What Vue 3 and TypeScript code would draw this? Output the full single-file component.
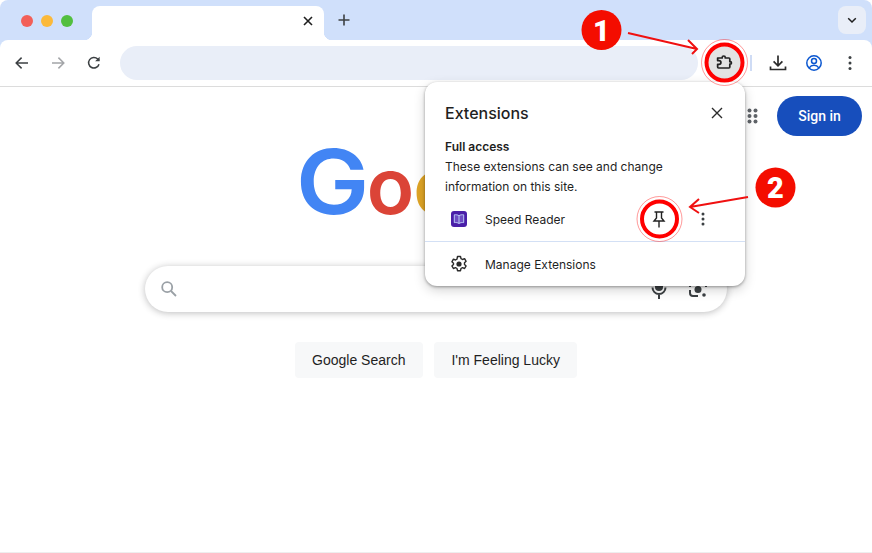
<template>
  <div class="browser">
    <!-- tab strip -->
    <div class="tabstrip">
      <div class="traffic">
        <span class="light red"></span>
        <span class="light amber"></span>
        <span class="light green"></span>
      </div>
      <div class="tab">
        <svg class="tab-close" width="12" height="12" viewBox="0 0 12 12">
          <path d="M2 2l8 8M10 2l-8 8" stroke="#1f1f1f" stroke-width="1.6" fill="none" />
        </svg>
      </div>
      <svg class="new-tab" width="14" height="14" viewBox="0 0 14 14">
        <path d="M7 1.5v11M1.5 7h11" stroke="#3c4043" stroke-width="1.6" fill="none" />
      </svg>
      <div class="tab-search">
        <svg width="12" height="12" viewBox="0 0 12 12">
          <path d="M2.2 4.2L6 8l3.8-3.8" stroke="#1f1f1f" stroke-width="1.5" fill="none" />
        </svg>
      </div>
    </div>

    <!-- toolbar -->
    <div class="toolbar">
      <button class="tool">
        <svg width="16" height="16" viewBox="0 0 16 16">
          <path d="M14 8H2.6M7.6 2.6L2.2 8l5.4 5.4" stroke="#3c4043" stroke-width="1.5" fill="none" />
        </svg>
      </button>
      <button class="tool">
        <svg width="16" height="16" viewBox="0 0 16 16">
          <path d="M2 8h11.4M8.4 2.6L13.800 8l-5.400 5.400" stroke="#a3a5a8" stroke-width="1.5" fill="none" />
        </svg>
      </button>
      <button class="tool">
        <svg width="16" height="16" viewBox="0 0 16 16">
          <path d="M13 9.2A5.3 5.3 0 1 1 11.700 4L13.200 5.600" stroke="#3c4043" stroke-width="1.5" fill="none" />
          <path d="M13.600 1.800v4.500H9.100z" fill="#3c4043" />
        </svg>
      </button>
      <div class="omnibox"></div>
      <button class="tool ext-btn">
        <svg width="20" height="20" viewBox="0 0 22 22">
          <path d="M4 5.500h5V5a1.700 1.700 0 0 1 3.400 0v.5h4a1 1 0 0 1 1 1v3h.4a1.400 1.400 0 0 1 0 2.800h-.4v3.200a1 1 0 0 1-1 1H5a1 1 0 0 1-1-1v-3h1.500a2.100 2.100 0 0 0 0-4.200H4z" stroke="#222" stroke-width="1.900" stroke-linejoin="round" fill="none" />
        </svg>
      </button>
      <span class="sep"></span>
      <button class="tool">
        <svg width="18" height="18" viewBox="0 0 18 18">
          <path d="M9 1.500v10M4.600 7.400L9 11.800l4.400-4.400M1.500 12.500v3h15v-3" stroke="#2b2b2b" stroke-width="1.700" fill="none" />
        </svg>
      </button>
      <button class="tool">
        <svg width="18" height="18" viewBox="0 0 18 18">
          <circle cx="9" cy="9" r="7.200" stroke="#0b57d0" stroke-width="1.500" fill="none" />
          <circle cx="9" cy="7" r="2.500" stroke="#0b57d0" stroke-width="1.500" fill="none" />
          <path d="M4.200 13.800c1.200-1.800 2.800-2.500 4.800-2.500s3.600.7 4.800 2.500" stroke="#0b57d0" stroke-width="1.500" fill="none" />
        </svg>
      </button>
      <button class="tool">
        <svg width="16" height="16" viewBox="0 0 16 16">
          <circle cx="8" cy="2.500" r="1.500" fill="#3c4043" />
          <circle cx="8" cy="8" r="1.500" fill="#3c4043" />
          <circle cx="8" cy="13.500" r="1.500" fill="#3c4043" />
        </svg>
      </button>
    </div>

    <!-- google home -->
    <div class="page">
      <div class="page-top">
        <svg class="apps" width="12" height="16" viewBox="0 0 12 16">
          <g fill="#5f6368">
            <template v-for="y in [2.5, 8, 13.5]" :key="y">
              <circle cx="2.500" :cy="y" r="2" />
              <circle cx="8.500" :cy="y" r="2" />
            </template>
          </g>
        </svg>
        <button class="sign-in">Sign in</button>
      </div>

      <div class="logo">
        <span v-for="l in logoLetters" :key="l.id" :class="{ cap: l.id === 1 }" :style="{ color: l.color }">{{ l.char }}</span>
      </div>

      <div class="searchbox">
        <svg width="20" height="20" viewBox="0 0 20 20">
          <circle cx="8.200" cy="8.200" r="5" stroke="#9aa0a6" stroke-width="1.800" fill="none" />
          <path d="M12 12l5 5" stroke="#9aa0a6" stroke-width="1.800" />
        </svg>
        <div class="search-right">
          <svg width="16" height="24" viewBox="0 0 16 24">
            <rect x="4" y="0" width="8" height="15" rx="4" fill="#3c4043" />
            <path d="M1.500 11.500a6.500 6.500 0 0 0 13 0M8 18v5" stroke="#3c4043" stroke-width="2" fill="none" />
          </svg>
          <svg width="20" height="24" viewBox="0 0 20 24">
            <circle cx="10" cy="13.500" r="3.500" fill="#3c4043" />
            <circle cx="16" cy="19" r="1.800" fill="#3c4043" />
            <path d="M2 11V10a3 3 0 0 1 3-3h1M14 7h1a3 3 0 0 1 3 3v1M2 14v3a3 3 0 0 0 3 3h5" stroke="#3c4043" stroke-width="2" fill="none" />
          </svg>
        </div>
      </div>

      <div class="actions">
        <button class="gbtn">Google Search</button>
        <button class="gbtn">I'm Feeling Lucky</button>
      </div>

      <!-- extensions menu -->
      <div class="ext-menu">
        <div class="menu-head">
          <span class="menu-title">Extensions</span>
          <svg width="12" height="12" viewBox="0 0 12 12">
            <path d="M1 1l10 10M11 1L1 11" stroke="#2b2b2b" stroke-width="1.400" fill="none" />
          </svg>
        </div>
        <div class="menu-info">
          <div class="access">Full access</div>
          <div class="access-desc">These extensions can see and change information on this site.</div>
        </div>
        <div class="menu-row ext-row">
          <svg class="row-icon" width="16" height="16" viewBox="0 0 16 16">
            <rect width="16" height="16" rx="3" fill="#4a1fa8" />
            <path d="M8 4.700C6.700 3.800 5 3.600 3.300 3.800v7.800c1.800-.2 3.400 0 4.700.9 1.300-.9 2.900-1.100 4.700-.9V3.800C11 3.600 9.300 3.800 8 4.700zM8 4.700v7.800" stroke="#b9c8f5" stroke-width="1" fill="#6d4cc4" />
          </svg>
          <span class="row-label">Speed Reader</span>
          <svg class="pin" width="14" height="18" viewBox="0 0 14 18">
            <path d="M2.500 2h9M4.500 2v6L2 11h10L9.500 8V2M7 11v6.500" stroke="#222" stroke-width="1.400" fill="none" />
          </svg>
          <svg class="row-more" width="6" height="16" viewBox="0 0 6 16">
            <circle cx="3" cy="3" r="1.500" fill="#3c4043" />
            <circle cx="3" cy="8" r="1.500" fill="#3c4043" />
            <circle cx="3" cy="13" r="1.500" fill="#3c4043" />
          </svg>
        </div>
        <div class="menu-row manage-row">
          <svg class="row-icon" width="18" height="18" viewBox="0 0 18 18">
            <path d="M7.500 1.500h3l.5 2.200 1.500.8 2.100-.8 1.500 2.600-1.600 1.500v1.600l1.600 1.500-1.500 2.600-2.100-.8-1.500.8-.5 2.200h-3l-.5-2.200-1.500-.8-2.100.8-1.500-2.600 1.600-1.500V8.300L1.900 6.800l1.500-2.600 2.100.8 1.500-.8z" stroke="#2b2b2b" stroke-width="1.400" stroke-linejoin="round" fill="none" />
            <circle cx="9" cy="9" r="2.600" fill="#2b2b2b" />
          </svg>
          <span class="row-label">Manage Extensions</span>
        </div>
      </div>
    </div>

    <!-- tutorial marks drawn over the browser -->
    <svg class="marks" width="872" height="553" viewBox="0 0 872 553">
      <g v-for="m in rings" :key="m.id" fill="none" stroke="#f00">
        <circle :cx="m.x" :cy="m.y" :r="m.r" stroke-width="4" />
        <circle :cx="m.x" :cy="m.y" :r="m.r + 5" stroke-width="0.800" stroke-opacity="0.500" />
      </g>
      <path d="M628 33L697 49M688 40L697 49L692 54" stroke="#f01010" stroke-width="2" fill="none" />
      <path d="M748 197L690 207M699 199L690 207L699 213" stroke="#f01010" stroke-width="2" fill="none" />
      <g v-for="b in badges" :key="b.label">
        <circle :cx="b.x" :cy="b.y" r="20" fill="#f40d00" />
        <text :x="b.x" :y="b.y + 10.500" class="badge-num" text-anchor="middle">{{ b.label }}</text>
      </g>
    </svg>
  </div>
</template>

<script setup lang="ts">
// only the letters not hidden by the menu
const logoLetters = [
  { id: 1, char: 'G', color: '#4285f4' },
  { id: 2, char: 'o', color: '#db4437' },
  { id: 3, char: 'o', color: '#e0a526' }
]

const rings = [
  { id: 'ext', x: 724.5, y: 62.5, r: 18 },
  { id: 'pin', x: 659.5, y: 219, r: 17.5 }
]

const badges = [
  { label: '1', x: 601.5, y: 30 },
  { label: '2', x: 775.5, y: 187.5 }
]
</script>

<style>
html,
body {
  margin: 0;
  background: #fff;
}
</style>

<style scoped>
.browser {
  position: relative;
  width: 872px;
  height: 553px;
  overflow: hidden;
  display: flex;
  flex-direction: column;
  font-family: Inter, "Liberation Sans", sans-serif;
  color: #1f1f1f;
  background: #fff;
}

button {
  border: none;
  padding: 0;
  background: none;
  font: inherit;
}

.tabstrip {
  height: 47px;
  margin-bottom: -8px;
  padding-top: 1px;
  flex: none;
  display: flex;
  align-items: flex-start;
  background: #d0e0fb;
  border-radius: 8px 8px 0 0;
}

.traffic {
  width: 92px;
  height: 39px;
  padding-left: 21px;
  box-sizing: border-box;
  display: flex;
  gap: 8px;
  align-items: center;
}

.light {
  width: 12px;
  height: 12px;
  border-radius: 50%;
}

.red { background: #f25f58; }
.amber { background: #fbb93a; }
.green { background: #52bf3f; }

.tab {
  position: relative;
  width: 232px;
  height: 34px;
  margin-top: 5px;
  background: #fff;
  border-radius: 8px 8px 0 0;
  display: flex;
  align-items: center;
  justify-content: flex-end;
  padding-right: 10px;
  box-sizing: border-box;
}

.tab::before,
.tab::after {
  content: '';
  position: absolute;
  bottom: 0;
  width: 8px;
  height: 8px;
  background: radial-gradient(circle at 0 0, #d0e0fb 8px, #fff 8.5px);
}

.tab::before {
  left: -8px;
}

.tab::after {
  right: -8px;
  background: radial-gradient(circle at 100% 0, #d0e0fb 8px, #fff 8.5px);
}

.tab-close {
  margin-top: -4px;
}

.new-tab {
  margin: 12px 0 0 13px;
}

.tab-search {
  margin: 5px 6px 0 auto;
  width: 28px;
  height: 28px;
  border-radius: 8px;
  background: #e9eef8;
  display: flex;
  align-items: center;
  justify-content: center;
}

.toolbar {
  position: relative;
  height: 46px;
  padding: 0 4px;
  flex: none;
  display: flex;
  align-items: center;
  background: #fff;
  border-bottom: 1px solid #dcdcdc;
  border-radius: 8px 8px 0 0;
}

.tool {
  width: 36px;
  height: 36px;
  flex: none;
  border-radius: 50%;
  display: flex;
  align-items: center;
  justify-content: center;
}

.omnibox {
  flex: 1;
  height: 34px;
  margin: 0 8px;
  border-radius: 17px;
  background: #e9eef8;
}

.ext-btn {
  background: #e3e3e3;
}

.sep {
  width: 2px;
  height: 16px;
  margin: 0 8px;
  background: #cfdcf5;
}

.page {
  position: relative;
  flex: 1;
  display: flex;
  flex-direction: column;
  align-items: center;
  border-bottom: 1px solid #eee;
}

.page-top {
  align-self: stretch;
  display: flex;
  align-items: center;
  justify-content: flex-end;
  padding: 9px 10px 0 0;
}

.apps {
  margin-right: 18px;
}

.sign-in {
  width: 85px;
  height: 40px;
  border-radius: 20px;
  background: #174ebc;
  color: #fff;
  font-family: Roboto, "Liberation Sans", sans-serif;
  font-size: 14px;
  font-weight: 500;
}

.logo {
  align-self: flex-start;
  margin: 0 0 -3px 296px;
  height: 92px;
  width: 129px;
  font-family: Inter, "Liberation Sans", sans-serif;
  font-size: 78px;
  font-weight: 600;
  line-height: 92px;
  letter-spacing: -1px;
  white-space: nowrap;
}

.logo .cap {
  display: inline-block;
  margin-right: 5px;
  font-size: 89px;
  font-weight: 600;
  transform: scaleX(1.1);
  transform-origin: left center;
}

.searchbox {
  width: 582px;
  height: 46px;
  margin-top: 41px;
  padding: 0 19px 0 14px;
  box-sizing: border-box;
  display: flex;
  align-items: center;
  justify-content: space-between;
  background: #fff;
  border-radius: 23px;
  box-shadow: 0 1px 7px rgba(32, 33, 36, 0.3);
}

.search-right {
  display: flex;
  align-items: center;
  gap: 21px;
  margin-top: -2px;
}

.actions {
  display: flex;
  gap: 11px;
  margin-top: 30px;
}

.gbtn {
  height: 36px;
  padding: 0 17.5px;
  border-radius: 4px;
  background: #f7f8f9;
  color: #1f1f1f;
  font-family: "Liberation Sans", Arial, sans-serif;
  font-size: 14px;
}

.ext-menu {
  position: absolute;
  top: -5px;
  left: 425px;
  width: 320px;
  height: 204px;
  background: #fff;
  border-radius: 12px;
  box-shadow: 0 1px 3px rgba(0, 0, 0, 0.35), 0 4px 12px rgba(0, 0, 0, 0.18);
  font-size: 12px;
  color: #1f1f1f;
}

.menu-head {
  height: 55px;
  padding: 7px 22px 0 20px;
  box-sizing: border-box;
  display: flex;
  align-items: center;
  justify-content: space-between;
}

.menu-title {
  font-size: 16px;
  font-weight: 500;
}

.menu-info {
  padding: 0 60px 0 20px;
  line-height: 20px;
}

.menu-row {
  display: flex;
  align-items: center;
  height: 44px;
  padding-left: 26px;
}

.access {
  font-weight: 600;
}

.row-icon {
  flex: none;
  margin-right: 18px;
}

.ext-row {
  border-bottom: 1px solid #d3e0f5;
}

.manage-row {
  padding-left: 25px;
}

.manage-row .row-icon {
  margin-right: 17px;
}

.row-label {
  flex: 1;
}

.pin {
  margin-right: 34px;
}

.row-more {
  margin-right: 39px;
}

.marks {
  position: absolute;
  top: 0;
  left: 0;
  pointer-events: none;
}

.badge-num {
  font-family: Roboto, "Liberation Sans", sans-serif;
  font-size: 29px;
  font-weight: 900;
  fill: #fff;
}
</style>
